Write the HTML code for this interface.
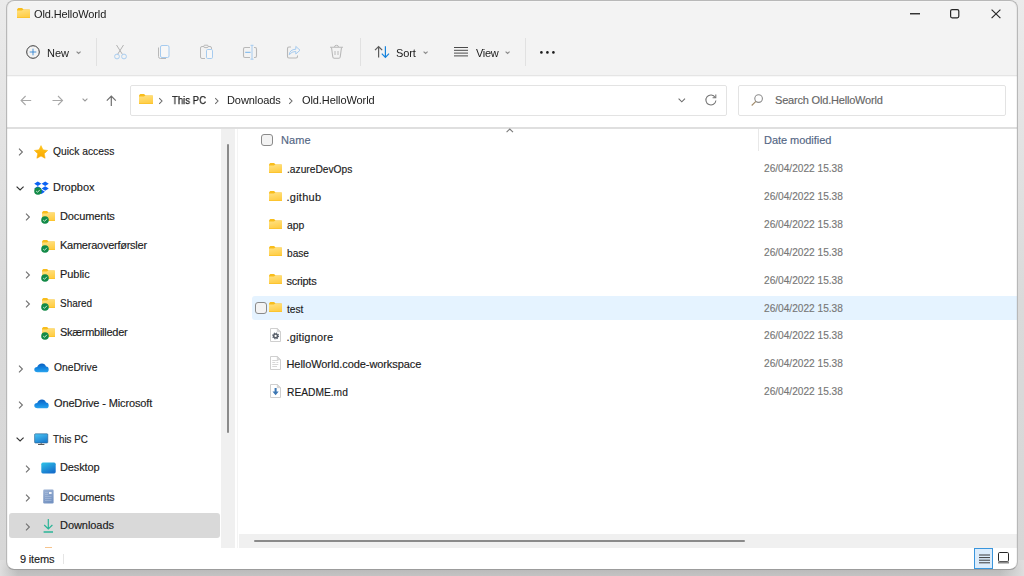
<!DOCTYPE html>
<html><head><meta charset="utf-8">
<style>
html,body{margin:0;padding:0;width:1024px;height:576px;overflow:hidden}
body{position:relative;background:linear-gradient(#ebebeb 0px,#dadada 300px,#d7d7d7 560px);font-family:"Liberation Sans",sans-serif;font-size:11px;line-height:13px;color:#1b1b1b}
.a{position:absolute}
.t{position:absolute;white-space:pre;font-size:11px;line-height:13px;-webkit-text-stroke:0.15px currentColor}
svg{position:absolute;overflow:visible}
#shadowb{position:absolute;left:0;top:560px;width:1024px;height:16px;background:linear-gradient(90deg,rgba(222,222,222,1) 0px,rgba(222,222,222,0) 18px,rgba(222,222,222,0) 1000px,rgba(222,222,222,1) 1024px),linear-gradient(#d0d0d0 0px,#bbbbbb 10px,#c3c3c3 16px)}
#clip{position:absolute;left:7px;top:1px;width:1010px;height:568px;border-radius:7px;overflow:hidden;background:#fff}
#pg{position:absolute;left:-7px;top:-1px;width:1024px;height:576px}
#frame{position:absolute;left:6px;top:0;width:1010px;height:568px;border:1px solid #b8b8b8;border-bottom-color:#9c9c9c;border-radius:8px;box-shadow:inset 1px 0 0 rgba(0,0,0,0.045),inset -1px 0 0 rgba(0,0,0,0.045)}
</style></head><body>

<svg width="0" height="0" style="position:absolute">
<defs>
<linearGradient id="fold" x1="0" y1="0" x2="0.3" y2="1"><stop offset="0" stop-color="#ffe182"/><stop offset="1" stop-color="#ffcd45"/></linearGradient>
<linearGradient id="star" x1="0" y1="0" x2="0" y2="1"><stop offset="0" stop-color="#ffc41a"/><stop offset="1" stop-color="#f9a800"/></linearGradient>
<linearGradient id="mon" x1="0" y1="0" x2="0.5" y2="1"><stop offset="0" stop-color="#4cc6f4"/><stop offset="1" stop-color="#1a7fd0"/></linearGradient>
<linearGradient id="desk" x1="0" y1="0" x2="0.6" y2="1"><stop offset="0" stop-color="#2fc4e8"/><stop offset="1" stop-color="#1670cc"/></linearGradient>
<linearGradient id="docs" x1="0" y1="0" x2="0.5" y2="1"><stop offset="0" stop-color="#9cb2d4"/><stop offset="1" stop-color="#7593c2"/></linearGradient>
<linearGradient id="cloud" x1="0" y1="0" x2="0" y2="1"><stop offset="0" stop-color="#0b5fc0"/><stop offset="0.55" stop-color="#1385e0"/><stop offset="1" stop-color="#2aa4ee"/></linearGradient>
</defs></svg>
<div id="shadowb"></div>
<div id="clip"><div id="pg">
<div class="a" style="left:0px;top:0px;width:1024px;height:75px;background:#f3f3f3;"></div>
<div class="a" style="left:0px;top:1px;width:1024px;height:1px;background:#f6f6f6;"></div>
<div class="a" style="left:0px;top:75px;width:1024px;height:1px;background:#e5e5e5;"></div>
<div class="a" style="left:0px;top:76px;width:1024px;height:1px;background:#f8f8f8;"></div>
<svg style="left:17px;top:8px" width="13" height="10" viewBox="0 0 13 10"><path d="M0.5 1.2 Q0.5 0 1.6 0 H4.6 Q5.4 0 5.9 0.8 L6.4 1.4 H12.4 Q13 1.4 13 2 V9.4 Q13 10 12.4 10 H0.6 Q0 10 0 9.4 V1.2 Z" fill="#f8bd1c"/><path d="M0 2.6 H4.8 L6.2 1.8 H12.5 Q13 1.8 13 2.4 V9.5 Q13 10 12.5 10 H0.5 Q0 10 0 9.5 Z" fill="url(#fold)"/><rect x="0" y="9" width="13" height="1" fill="#fbc22c" opacity="0.85"/></svg>
<div class="t" style="left:34px;top:8px;letter-spacing:-0.115px;-webkit-text-stroke:0;will-change:transform;color:#202020">Old.HelloWorld</div>
<div class="a" style="left:910px;top:13px;width:10px;height:1px;background:#333333;"></div>
<div class="a" style="left:910px;top:14px;width:10px;height:1px;background:#9a9a9a;"></div>
<svg style="left:950px;top:9px" width="10" height="10" viewBox="0 0 10 10"><rect x="0.6" y="0.6" width="8.2" height="8.2" rx="1.5" fill="none" stroke="#262626" stroke-width="1.2"/></svg>
<svg style="left:991px;top:9px" width="10" height="10" viewBox="0 0 10 10"><path d="M0.6 0.6 L9.4 9.2 M9.4 0.6 L0.6 9.2" stroke="#262626" stroke-width="1.15"/></svg>
<svg style="left:26px;top:45px" width="14" height="14" viewBox="0 0 14 14"><circle cx="7" cy="7" r="6.3" fill="none" stroke="#3a3a3a" stroke-width="1"/><path d="M7 3.7 V10.3 M3.7 7 H10.3" stroke="#2a7fd0" stroke-width="0.85"/></svg>
<div class="t" style="left:47px;top:47px;letter-spacing:0px;-webkit-text-stroke:0;will-change:transform;color:#202020">New</div>
<svg style="left:76px;top:51px" width="6" height="5" viewBox="0 0 6 5"><path d="M0.6 0.6 L2.6 2.4 L4.6 0.6" stroke="#8c8c8c" stroke-width="1.2" fill="none"/></svg>
<div class="a" style="left:96px;top:38px;width:1px;height:28px;background:#e1e1e1;"></div>
<svg style="left:113px;top:44px" width="16" height="16" viewBox="0 0 16 16"><path d="M3.5 1 L9.5 10.5 M10.5 1 L4.5 10.5" stroke="#b3b3b3" stroke-width="1" fill="none"/><circle cx="4" cy="12.5" r="2.4" fill="none" stroke="#a9cdf0" stroke-width="1"/><circle cx="11" cy="12.5" r="2.4" fill="none" stroke="#a9cdf0" stroke-width="1"/></svg>
<svg style="left:157px;top:44px" width="14" height="16" viewBox="0 0 14 16"><path d="M1.5 3.5 V12.5 Q1.5 14.5 3.5 14.5 H9" stroke="#b8b8b8" stroke-width="1" fill="none"/><rect x="3.5" y="1.5" width="8.5" height="12" rx="1.5" fill="#f7f7f7" stroke="#a6cbef" stroke-width="1"/></svg>
<svg style="left:199px;top:44px" width="16" height="16" viewBox="0 0 16 16"><path d="M6 14.5 H3 Q1.5 14.5 1.5 13 V4 Q1.5 2.5 3 2.5 H11 Q12.5 2.5 12.5 4 V5" stroke="#b8b8b8" stroke-width="1" fill="none"/><rect x="4.8" y="1.2" width="4.4" height="2.4" rx="1" fill="#f3f3f3" stroke="#b8b8b8" stroke-width="1"/><rect x="7.5" y="5.5" width="6" height="9" rx="1.2" fill="#f7f7f7" stroke="#a6cbef" stroke-width="1"/></svg>
<svg style="left:242px;top:44px" width="16" height="16" viewBox="0 0 16 16"><path d="M8 3.5 H3 Q1.5 3.5 1.5 5 V12 Q1.5 13.5 3 13.5 H8 M12 3.5 H13 Q14.5 3.5 14.5 5 V12 Q14.5 13.5 13 13.5 H12" stroke="#b8b8b8" stroke-width="1.1" fill="none"/><path d="M3.2 8.3 H8.6" stroke="#8cbfec" stroke-width="1.3"/><path d="M10 1.3 V15.2 M8.5 1.3 H11.5 M8.5 15.2 H11.5" stroke="#a6cbef" stroke-width="1"/></svg>
<svg style="left:286px;top:44px" width="16" height="16" viewBox="0 0 16 16"><path d="M5 3 H3 Q1.5 3 1.5 4.5 V12.5 Q1.5 14 3 14 H10 Q11.5 14 11.5 12.5 V11.5" stroke="#b8b8b8" stroke-width="1.1" fill="none"/><path d="M3.2 10.8 Q3.6 5.6 9.8 5.2 V2.4 L14 6.2 L9.8 10 V7.4 Q5.6 7.4 3.2 10.8 Z" fill="#f4f4f4" stroke="#a6cbef" stroke-width="1"/></svg>
<svg style="left:329px;top:44px" width="16" height="16" viewBox="0 0 16 16"><path d="M1 3.3 H14" stroke="#b8b8b8" stroke-width="1.1"/><path d="M5.5 3 Q5.5 1.3 7.5 1.3 Q9.5 1.3 9.5 3" stroke="#b8b8b8" stroke-width="1" fill="none"/><path d="M2.5 3.5 L3.8 13 Q4 14.3 5.3 14.3 H9.7 Q11 14.3 11.2 13 L12.5 3.5" stroke="#b8b8b8" stroke-width="1.1" fill="none"/><path d="M6 7 V11 M9 7 V11" stroke="#b8b8b8" stroke-width="1"/></svg>
<div class="a" style="left:360px;top:38px;width:1px;height:28px;background:#e1e1e1;"></div>
<svg style="left:374px;top:45px" width="17" height="14" viewBox="0 0 17 14"><path d="M4.6 12.5 V1.8 M1 5.2 L4.6 1.6 L8.2 5.2" stroke="#5c5c5c" stroke-width="1.2" fill="none"/><path d="M11.4 1.2 V12.2 M7.8 8.6 L11.4 12.3 L15 8.6" stroke="#1583dd" stroke-width="1.2" fill="none"/></svg>
<div class="t" style="left:396px;top:47px;letter-spacing:-0.13px;-webkit-text-stroke:0;will-change:transform;color:#202020">Sort</div>
<svg style="left:423px;top:51px" width="6" height="5" viewBox="0 0 6 5"><path d="M0.6 0.6 L2.6 2.4 L4.6 0.6" stroke="#8c8c8c" stroke-width="1.2" fill="none"/></svg>
<svg style="left:454px;top:46px" width="15" height="12" viewBox="0 0 15 12"><path d="M0 1.5 H14 M0 4.3 H14 M0 7.1 H14 M0 9.9 H14" stroke="#4a4a4a" stroke-width="1"/></svg>
<div class="t" style="left:476px;top:47px;letter-spacing:-0.28px;-webkit-text-stroke:0;will-change:transform;color:#202020">View</div>
<svg style="left:505px;top:51px" width="6" height="5" viewBox="0 0 6 5"><path d="M0.6 0.6 L2.6 2.4 L4.6 0.6" stroke="#8c8c8c" stroke-width="1.2" fill="none"/></svg>
<div class="a" style="left:525px;top:38px;width:1px;height:28px;background:#e1e1e1;"></div>
<svg style="left:540px;top:51px" width="16" height="3" viewBox="0 0 16 3"><circle cx="1.4" cy="1.4" r="1.3" fill="#1b1b1b"/><circle cx="7.4" cy="1.4" r="1.3" fill="#1b1b1b"/><circle cx="13.4" cy="1.4" r="1.3" fill="#1b1b1b"/></svg>
<svg style="left:20px;top:95px" width="12" height="11" viewBox="0 0 12 11"><path d="M11.2 5.5 H1.2 M5.6 1 L1.1 5.5 L5.6 10" stroke="#a8a8a8" stroke-width="1.1" fill="none"/></svg>
<svg style="left:52px;top:95px" width="12" height="11" viewBox="0 0 12 11"><path d="M0.5 5.5 H10.5 M6 1 L10.5 5.5 L6 10" stroke="#a8a8a8" stroke-width="1.1" fill="none"/></svg>
<svg style="left:82px;top:98px" width="7" height="4" viewBox="0 0 7 4"><path d="M0.6 0.6 L3 3 L5.4 0.6" stroke="#9a9a9a" stroke-width="1.1" fill="none"/></svg>
<svg style="left:106px;top:95px" width="11" height="12" viewBox="0 0 11 12"><path d="M5.3 11 V1.2 M0.8 5.6 L5.3 1.1 L9.8 5.6" stroke="#6f6f6f" stroke-width="1.2" fill="none"/></svg>
<div class="a" style="left:130px;top:85px;width:595px;height:29px;border:1px solid #e3e3e3;border-radius:2px;background:#fff"></div>
<svg style="left:139px;top:94px" width="14" height="10" viewBox="0 0 14 10"><path d="M0.5 1.2 Q0.5 0 1.6 0 H4.6 Q5.4 0 5.9 0.8 L6.4 1.4 H13.4 Q14 1.4 14 2 V9.4 Q14 10 13.4 10 H0.6 Q0 10 0 9.4 V1.2 Z" fill="#f8bd1c"/><path d="M0 2.6 H4.8 L6.2 1.8 H13.5 Q14 1.8 14 2.4 V9.5 Q14 10 13.5 10 H0.5 Q0 10 0 9.5 Z" fill="url(#fold)"/><rect x="0" y="9" width="14" height="1" fill="#fbc22c" opacity="0.85"/></svg>
<svg style="left:158px;top:97px" width="6" height="8" viewBox="0 0 6 8"><path d="M1.2 1.2 L4 4 L1.2 6.8" stroke="#6a6a6a" stroke-width="1.05" fill="none"/></svg>
<div class="t" style="left:172px;top:94px;transform:scaleX(0.87);transform-origin:0 0;-webkit-text-stroke:0;will-change:transform;color:#202020;-webkit-text-stroke:0.25px #202020">This PC</div>
<svg style="left:214px;top:97px" width="6" height="8" viewBox="0 0 6 8"><path d="M1.2 1.2 L4 4 L1.2 6.8" stroke="#6a6a6a" stroke-width="1.05" fill="none"/></svg>
<div class="t" style="left:227px;top:94px;letter-spacing:-0.075px;-webkit-text-stroke:0;will-change:transform;color:#202020">Downloads</div>
<svg style="left:288px;top:97px" width="6" height="8" viewBox="0 0 6 8"><path d="M1.2 1.2 L4 4 L1.2 6.8" stroke="#6a6a6a" stroke-width="1.05" fill="none"/></svg>
<div class="t" style="left:302px;top:94px;letter-spacing:-0.09px;-webkit-text-stroke:0;will-change:transform;color:#202020">Old.HelloWorld</div>
<svg style="left:678px;top:98px" width="8" height="5" viewBox="0 0 8 5"><path d="M0.6 0.6 L3.8 3.8 L7 0.6" stroke="#6e6e6e" stroke-width="1.1" fill="none"/></svg>
<svg style="left:705px;top:94px" width="12" height="12" viewBox="0 0 12 12"><path d="M10.2 3.4 A5 5 0 1 0 10.9 6.5" stroke="#747474" stroke-width="1.05" fill="none"/><path d="M10.8 0.6 V3.8 H7.6" stroke="#747474" stroke-width="1.05" fill="none"/></svg>
<div class="a" style="left:738px;top:85px;width:266px;height:29px;border:1px solid #e3e3e3;border-radius:2px;background:#fff"></div>
<svg style="left:751px;top:94px" width="13" height="13" viewBox="0 0 13 13"><circle cx="7.6" cy="4.6" r="3.8" fill="none" stroke="#8c8c8c" stroke-width="1.1"/><path d="M4.9 7.3 L0.7 11.5" stroke="#a08a6a" stroke-width="1.1"/></svg>
<div class="t" style="left:775px;top:94px;color:#666666;letter-spacing:-0.19px">Search Old.HelloWorld</div>
<div class="a" style="left:0px;top:127px;width:1024px;height:2px;background:#dfdfdf;"></div>
<div class="a" style="left:221px;top:129px;width:14px;height:419px;background:#f0f0f0;"></div>
<div class="a" style="left:237px;top:129px;width:1px;height:419px;background:#f4f4f4;"></div>
<div class="a" style="left:227px;top:144px;width:2px;height:289px;background:#8a8a8a;border-radius:1px"></div>
<div class="a" style="left:9px;top:513px;width:211px;height:25px;background:#d9d9d9;border-radius:3px"></div>
<svg style="left:18px;top:148px" width="6" height="8" viewBox="0 0 6 8"><path d="M1 0.6 L4.4 4 L1 7.4" stroke="#707070" stroke-width="1.1" fill="none"/></svg>
<svg style="left:34px;top:145px" width="15" height="14" viewBox="0 0 15 14"><path d="M7.00 0.60 L9.00 4.85 L13.66 5.44 L10.23 8.65 L11.11 13.26 L7.00 11.00 L2.89 13.26 L3.77 8.65 L0.34 5.44 L5.00 4.85 Z" fill="url(#star)" stroke="url(#star)" stroke-width="0.6" stroke-linejoin="round"/></svg>
<div class="t" style="left:53px;top:145px;transform:scaleX(0.937);transform-origin:0 0">Quick access</div>
<svg style="left:16px;top:186px" width="9" height="5" viewBox="0 0 9 5"><path d="M0.6 0.6 L4.1 3.9 L7.6 0.6" stroke="#333333" stroke-width="1.2" fill="none"/></svg>
<svg style="left:34px;top:181px" width="15" height="14" viewBox="0 0 15 14"><path d="M3.8 0.4 L7.4 2.7 L3.8 5 L0.2 2.7 Z M11.2 0.4 L14.8 2.7 L11.2 5 L7.6 2.7 Z M3.8 5.2 L7.4 7.5 L3.8 9.8 L0.2 7.5 Z M11.2 5.2 L14.8 7.5 L11.2 9.8 L7.6 7.5 Z M7.5 8.6 L10.9 10.8 L7.5 13 L4.1 10.8 Z" fill="#0b62f4"/></svg>
<svg style="left:34px;top:187px" width="8" height="8" viewBox="0 0 8 8"><circle cx="4" cy="4" r="3.8" fill="#128a47"/><path d="M2.2 4.1 L3.5 5.3 L5.9 2.8" stroke="#d8f0df" stroke-width="0.9" fill="none"/></svg>
<div class="t" style="left:53px;top:181px;letter-spacing:0px">Dropbox</div>
<svg style="left:25px;top:213px" width="6" height="8" viewBox="0 0 6 8"><path d="M1 0.6 L4.4 4 L1 7.4" stroke="#707070" stroke-width="1.1" fill="none"/></svg>
<svg style="left:42px;top:211px" width="13" height="10" viewBox="0 0 13 10"><path d="M0.5 1.2 Q0.5 0 1.6 0 H4.6 Q5.4 0 5.9 0.8 L6.4 1.4 H12.4 Q13 1.4 13 2 V9.4 Q13 10 12.4 10 H0.6 Q0 10 0 9.4 V1.2 Z" fill="#f8bd1c"/><path d="M0 2.6 H4.8 L6.2 1.8 H12.5 Q13 1.8 13 2.4 V9.5 Q13 10 12.5 10 H0.5 Q0 10 0 9.5 Z" fill="url(#fold)"/><rect x="0" y="9" width="13" height="1" fill="#fbc22c" opacity="0.85"/></svg>
<svg style="left:41px;top:216px" width="8" height="8" viewBox="0 0 8 8"><circle cx="4" cy="4" r="3.8" fill="#128a47"/><path d="M2.2 4.1 L3.5 5.3 L5.9 2.8" stroke="#d8f0df" stroke-width="0.9" fill="none"/></svg>
<div class="t" style="left:60px;top:210px;letter-spacing:-0.1px">Documents</div>
<svg style="left:42px;top:240px" width="13" height="10" viewBox="0 0 13 10"><path d="M0.5 1.2 Q0.5 0 1.6 0 H4.6 Q5.4 0 5.9 0.8 L6.4 1.4 H12.4 Q13 1.4 13 2 V9.4 Q13 10 12.4 10 H0.6 Q0 10 0 9.4 V1.2 Z" fill="#f8bd1c"/><path d="M0 2.6 H4.8 L6.2 1.8 H12.5 Q13 1.8 13 2.4 V9.5 Q13 10 12.5 10 H0.5 Q0 10 0 9.5 Z" fill="url(#fold)"/><rect x="0" y="9" width="13" height="1" fill="#fbc22c" opacity="0.85"/></svg>
<svg style="left:41px;top:245px" width="8" height="8" viewBox="0 0 8 8"><circle cx="4" cy="4" r="3.8" fill="#128a47"/><path d="M2.2 4.1 L3.5 5.3 L5.9 2.8" stroke="#d8f0df" stroke-width="0.9" fill="none"/></svg>
<div class="t" style="left:60px;top:239px;letter-spacing:-0.25px">Kameraoverførsler</div>
<svg style="left:25px;top:271px" width="6" height="8" viewBox="0 0 6 8"><path d="M1 0.6 L4.4 4 L1 7.4" stroke="#707070" stroke-width="1.1" fill="none"/></svg>
<svg style="left:42px;top:269px" width="13" height="10" viewBox="0 0 13 10"><path d="M0.5 1.2 Q0.5 0 1.6 0 H4.6 Q5.4 0 5.9 0.8 L6.4 1.4 H12.4 Q13 1.4 13 2 V9.4 Q13 10 12.4 10 H0.6 Q0 10 0 9.4 V1.2 Z" fill="#f8bd1c"/><path d="M0 2.6 H4.8 L6.2 1.8 H12.5 Q13 1.8 13 2.4 V9.5 Q13 10 12.5 10 H0.5 Q0 10 0 9.5 Z" fill="url(#fold)"/><rect x="0" y="9" width="13" height="1" fill="#fbc22c" opacity="0.85"/></svg>
<svg style="left:41px;top:274px" width="8" height="8" viewBox="0 0 8 8"><circle cx="4" cy="4" r="3.8" fill="#128a47"/><path d="M2.2 4.1 L3.5 5.3 L5.9 2.8" stroke="#d8f0df" stroke-width="0.9" fill="none"/></svg>
<div class="t" style="left:60px;top:268px;letter-spacing:-0.04px">Public</div>
<svg style="left:25px;top:300px" width="6" height="8" viewBox="0 0 6 8"><path d="M1 0.6 L4.4 4 L1 7.4" stroke="#707070" stroke-width="1.1" fill="none"/></svg>
<svg style="left:42px;top:298px" width="13" height="10" viewBox="0 0 13 10"><path d="M0.5 1.2 Q0.5 0 1.6 0 H4.6 Q5.4 0 5.9 0.8 L6.4 1.4 H12.4 Q13 1.4 13 2 V9.4 Q13 10 12.4 10 H0.6 Q0 10 0 9.4 V1.2 Z" fill="#f8bd1c"/><path d="M0 2.6 H4.8 L6.2 1.8 H12.5 Q13 1.8 13 2.4 V9.5 Q13 10 12.5 10 H0.5 Q0 10 0 9.5 Z" fill="url(#fold)"/><rect x="0" y="9" width="13" height="1" fill="#fbc22c" opacity="0.85"/></svg>
<svg style="left:41px;top:303px" width="8" height="8" viewBox="0 0 8 8"><circle cx="4" cy="4" r="3.8" fill="#128a47"/><path d="M2.2 4.1 L3.5 5.3 L5.9 2.8" stroke="#d8f0df" stroke-width="0.9" fill="none"/></svg>
<div class="t" style="left:60px;top:297px;transform:scaleX(0.905);transform-origin:0 0">Shared</div>
<svg style="left:42px;top:327px" width="13" height="10" viewBox="0 0 13 10"><path d="M0.5 1.2 Q0.5 0 1.6 0 H4.6 Q5.4 0 5.9 0.8 L6.4 1.4 H12.4 Q13 1.4 13 2 V9.4 Q13 10 12.4 10 H0.6 Q0 10 0 9.4 V1.2 Z" fill="#f8bd1c"/><path d="M0 2.6 H4.8 L6.2 1.8 H12.5 Q13 1.8 13 2.4 V9.5 Q13 10 12.5 10 H0.5 Q0 10 0 9.5 Z" fill="url(#fold)"/><rect x="0" y="9" width="13" height="1" fill="#fbc22c" opacity="0.85"/></svg>
<svg style="left:41px;top:332px" width="8" height="8" viewBox="0 0 8 8"><circle cx="4" cy="4" r="3.8" fill="#128a47"/><path d="M2.2 4.1 L3.5 5.3 L5.9 2.8" stroke="#d8f0df" stroke-width="0.9" fill="none"/></svg>
<div class="t" style="left:60px;top:326px;letter-spacing:-0.27px">Skærmbilleder</div>
<svg style="left:18px;top:365px" width="6" height="8" viewBox="0 0 6 8"><path d="M1 0.6 L4.4 4 L1 7.4" stroke="#707070" stroke-width="1.1" fill="none"/></svg>
<svg style="left:34px;top:363px" width="15" height="10" viewBox="0 0 15 10"><path d="M3.5 9.3 Q0.3 9.3 0.3 6.6 Q0.3 4.2 3.2 4 Q4.4 0.4 8 0.4 Q11 0.4 12 3.4 Q14.7 3.6 14.7 6.4 Q14.7 9.3 12 9.3 Z" fill="url(#cloud)"/></svg>
<div class="t" style="left:54px;top:361px;transform:scaleX(0.935);transform-origin:0 0">OneDrive</div>
<svg style="left:18px;top:401px" width="6" height="8" viewBox="0 0 6 8"><path d="M1 0.6 L4.4 4 L1 7.4" stroke="#707070" stroke-width="1.1" fill="none"/></svg>
<svg style="left:34px;top:399px" width="15" height="10" viewBox="0 0 15 10"><path d="M3.5 9.3 Q0.3 9.3 0.3 6.6 Q0.3 4.2 3.2 4 Q4.4 0.4 8 0.4 Q11 0.4 12 3.4 Q14.7 3.6 14.7 6.4 Q14.7 9.3 12 9.3 Z" fill="url(#cloud)"/></svg>
<div class="t" style="left:54px;top:397px;letter-spacing:-0.14px">OneDrive - Microsoft</div>
<svg style="left:16px;top:437px" width="9" height="5" viewBox="0 0 9 5"><path d="M0.6 0.6 L4.1 3.9 L7.6 0.6" stroke="#333333" stroke-width="1.2" fill="none"/></svg>
<svg style="left:34px;top:433px" width="15" height="13" viewBox="0 0 15 13"><rect x="0.6" y="0.8" width="13.2" height="9.2" rx="0.8" fill="url(#mon)" stroke="#2a5a88" stroke-width="0.6"/><path d="M7.2 10 V11" stroke="#6a6a6a" stroke-width="1"/><path d="M4 11.5 H10.4" stroke="#5a5a5a" stroke-width="1"/></svg>
<div class="t" style="left:53px;top:433px;transform:scaleX(0.89);transform-origin:0 0">This PC</div>
<svg style="left:25px;top:465px" width="6" height="8" viewBox="0 0 6 8"><path d="M1 0.6 L4.4 4 L1 7.4" stroke="#707070" stroke-width="1.1" fill="none"/></svg>
<svg style="left:41px;top:462px" width="15" height="12" viewBox="0 0 15 12"><rect x="0.3" y="0.6" width="14.4" height="10.8" rx="1.6" fill="url(#desk)"/></svg>
<div class="t" style="left:60px;top:461px;letter-spacing:-0.14px">Desktop</div>
<svg style="left:25px;top:494px" width="6" height="8" viewBox="0 0 6 8"><path d="M1 0.6 L4.4 4 L1 7.4" stroke="#707070" stroke-width="1.1" fill="none"/></svg>
<svg style="left:43px;top:489px" width="11" height="15" viewBox="0 0 11 15"><rect x="0.2" y="0.6" width="10.4" height="13.8" rx="1.2" fill="url(#docs)"/><path d="M2 3.5 H5 M2 5.5 H5 M2 7.5 H8.5 M2 9.5 H8.5 M2 11.5 H8.5" stroke="#b5c6e0" stroke-width="0.5"/><rect x="6" y="3" width="2.6" height="2" fill="#eef2f9"/></svg>
<div class="t" style="left:60px;top:491px;letter-spacing:-0.1px">Documents</div>
<svg style="left:25px;top:523px" width="6" height="8" viewBox="0 0 6 8"><path d="M1 0.6 L4.4 4 L1 7.4" stroke="#707070" stroke-width="1.1" fill="none"/></svg>
<svg style="left:43px;top:518px" width="11" height="16" viewBox="0 0 11 16"><path d="M5.3 1 V11 M1.2 7 L5.3 11 L9.4 7" stroke="#2ab597" stroke-width="1.2" fill="none"/><path d="M0.6 14 H10" stroke="#2ab597" stroke-width="1.4"/></svg>
<div class="t" style="left:60px;top:519px;letter-spacing:-0.06px">Downloads</div>
<div class="a" style="left:45px;top:547px;width:7px;height:1px;background:#f6c48e;"></div>
<div class="a" style="left:261px;top:134px;width:10px;height:10px;border:1px solid #8a8a8a;border-radius:3px;background:#f3f3f3"></div>
<div class="t" style="left:281px;top:134px;color:#536684;letter-spacing:0.1px">Name</div>
<svg style="left:506px;top:128px" width="8" height="5" viewBox="0 0 8 5"><path d="M0.6 4.2 L3.8 1 L7 4.2" stroke="#7a7a7a" stroke-width="1.1" fill="none"/></svg>
<div class="a" style="left:758px;top:129px;width:1px;height:22px;background:#e8e8e8;"></div>
<div class="t" style="left:764px;top:134px;color:#536684;letter-spacing:-0.04px">Date modified</div>
<div class="a" style="left:252px;top:296px;width:765px;height:24px;background:#e5f3ff;border-radius:3px 0 0 3px"></div>
<div class="a" style="left:255px;top:302px;width:10px;height:10px;border:1px solid #8a8a8a;border-radius:3px;background:#f3f3f3"></div>
<svg style="left:269px;top:163px" width="13" height="10" viewBox="0 0 13 10"><path d="M0.5 1.2 Q0.5 0 1.6 0 H4.6 Q5.4 0 5.9 0.8 L6.4 1.4 H12.4 Q13 1.4 13 2 V9.4 Q13 10 12.4 10 H0.6 Q0 10 0 9.4 V1.2 Z" fill="#f8bd1c"/><path d="M0 2.6 H4.8 L6.2 1.8 H12.5 Q13 1.8 13 2.4 V9.5 Q13 10 12.5 10 H0.5 Q0 10 0 9.5 Z" fill="url(#fold)"/><rect x="0" y="9" width="13" height="1" fill="#fbc22c" opacity="0.85"/></svg>
<div class="t" style="left:286.5px;top:163px;transform:scaleX(0.93);transform-origin:0 0">.azureDevOps</div>
<div class="t" style="left:764px;top:162px;transform:scaleX(0.921);transform-origin:0 0;color:#777777">26/04/2022 15.38</div>
<svg style="left:269px;top:191px" width="13" height="10" viewBox="0 0 13 10"><path d="M0.5 1.2 Q0.5 0 1.6 0 H4.6 Q5.4 0 5.9 0.8 L6.4 1.4 H12.4 Q13 1.4 13 2 V9.4 Q13 10 12.4 10 H0.6 Q0 10 0 9.4 V1.2 Z" fill="#f8bd1c"/><path d="M0 2.6 H4.8 L6.2 1.8 H12.5 Q13 1.8 13 2.4 V9.5 Q13 10 12.5 10 H0.5 Q0 10 0 9.5 Z" fill="url(#fold)"/><rect x="0" y="9" width="13" height="1" fill="#fbc22c" opacity="0.85"/></svg>
<div class="t" style="left:286.5px;top:191px;letter-spacing:0.25px">.github</div>
<div class="t" style="left:764px;top:190px;transform:scaleX(0.921);transform-origin:0 0;color:#777777">26/04/2022 15.38</div>
<svg style="left:269px;top:219px" width="13" height="10" viewBox="0 0 13 10"><path d="M0.5 1.2 Q0.5 0 1.6 0 H4.6 Q5.4 0 5.9 0.8 L6.4 1.4 H12.4 Q13 1.4 13 2 V9.4 Q13 10 12.4 10 H0.6 Q0 10 0 9.4 V1.2 Z" fill="#f8bd1c"/><path d="M0 2.6 H4.8 L6.2 1.8 H12.5 Q13 1.8 13 2.4 V9.5 Q13 10 12.5 10 H0.5 Q0 10 0 9.5 Z" fill="url(#fold)"/><rect x="0" y="9" width="13" height="1" fill="#fbc22c" opacity="0.85"/></svg>
<div class="t" style="left:286.5px;top:219px;transform:scaleX(0.944);transform-origin:0 0">app</div>
<div class="t" style="left:764px;top:218px;transform:scaleX(0.921);transform-origin:0 0;color:#777777">26/04/2022 15.38</div>
<svg style="left:269px;top:246px" width="13" height="10" viewBox="0 0 13 10"><path d="M0.5 1.2 Q0.5 0 1.6 0 H4.6 Q5.4 0 5.9 0.8 L6.4 1.4 H12.4 Q13 1.4 13 2 V9.4 Q13 10 12.4 10 H0.6 Q0 10 0 9.4 V1.2 Z" fill="#f8bd1c"/><path d="M0 2.6 H4.8 L6.2 1.8 H12.5 Q13 1.8 13 2.4 V9.5 Q13 10 12.5 10 H0.5 Q0 10 0 9.5 Z" fill="url(#fold)"/><rect x="0" y="9" width="13" height="1" fill="#fbc22c" opacity="0.85"/></svg>
<div class="t" style="left:286.5px;top:247px;transform:scaleX(0.92);transform-origin:0 0">base</div>
<div class="t" style="left:764px;top:246px;transform:scaleX(0.921);transform-origin:0 0;color:#777777">26/04/2022 15.38</div>
<svg style="left:269px;top:274px" width="13" height="10" viewBox="0 0 13 10"><path d="M0.5 1.2 Q0.5 0 1.6 0 H4.6 Q5.4 0 5.9 0.8 L6.4 1.4 H12.4 Q13 1.4 13 2 V9.4 Q13 10 12.4 10 H0.6 Q0 10 0 9.4 V1.2 Z" fill="#f8bd1c"/><path d="M0 2.6 H4.8 L6.2 1.8 H12.5 Q13 1.8 13 2.4 V9.5 Q13 10 12.5 10 H0.5 Q0 10 0 9.5 Z" fill="url(#fold)"/><rect x="0" y="9" width="13" height="1" fill="#fbc22c" opacity="0.85"/></svg>
<div class="t" style="left:286.5px;top:275px;letter-spacing:-0.27px">scripts</div>
<div class="t" style="left:764px;top:274px;transform:scaleX(0.921);transform-origin:0 0;color:#777777">26/04/2022 15.38</div>
<svg style="left:269px;top:302px" width="13" height="10" viewBox="0 0 13 10"><path d="M0.5 1.2 Q0.5 0 1.6 0 H4.6 Q5.4 0 5.9 0.8 L6.4 1.4 H12.4 Q13 1.4 13 2 V9.4 Q13 10 12.4 10 H0.6 Q0 10 0 9.4 V1.2 Z" fill="#f8bd1c"/><path d="M0 2.6 H4.8 L6.2 1.8 H12.5 Q13 1.8 13 2.4 V9.5 Q13 10 12.5 10 H0.5 Q0 10 0 9.5 Z" fill="url(#fold)"/><rect x="0" y="9" width="13" height="1" fill="#fbc22c" opacity="0.85"/></svg>
<div class="t" style="left:286.5px;top:303px;transform:scaleX(0.922);transform-origin:0 0">test</div>
<div class="t" style="left:764px;top:302px;transform:scaleX(0.921);transform-origin:0 0;color:#777777">26/04/2022 15.38</div>
<svg style="left:270px;top:328px" width="11" height="14" viewBox="0 0 11 14"><path d="M0.5 0.5 H7.3 L10.5 3.7 V13.5 H0.5 Z" fill="#ffffff" stroke="#cfcfcf" stroke-width="1"/><path d="M7.3 0.5 V3.7 H10.5 Z" fill="#d6d6d6" stroke="#cfcfcf" stroke-width="0.8"/><circle cx="5.6" cy="7.9" r="1.9" fill="none" stroke="#585d66" stroke-width="1.5"/><circle cx="5.6" cy="7.9" r="2.9" fill="none" stroke="#5a6472" stroke-width="1.2" stroke-dasharray="1.2 1.08"/></svg>
<div class="t" style="left:286.5px;top:331px;letter-spacing:0.15px">.gitignore</div>
<div class="t" style="left:764px;top:329px;transform:scaleX(0.921);transform-origin:0 0;color:#777777">26/04/2022 15.38</div>
<svg style="left:270px;top:356px" width="11" height="14" viewBox="0 0 11 14"><path d="M0.5 0.5 H7.3 L10.5 3.7 V13.5 H0.5 Z" fill="#ffffff" stroke="#cfcfcf" stroke-width="1"/><path d="M7.3 0.5 V3.7 H10.5 Z" fill="#d6d6d6" stroke="#cfcfcf" stroke-width="0.8"/><path d="M2.3 4.5 H8.3 M2.3 6.5 H5.3 M6.5 6.5 H8.3 M2.3 8.5 H8.3 M2.3 10.5 H7" stroke="#d2d2d2" stroke-width="0.9"/></svg>
<div class="t" style="left:286.5px;top:358px;letter-spacing:-0.08px">HelloWorld.code-workspace</div>
<div class="t" style="left:764px;top:357px;transform:scaleX(0.921);transform-origin:0 0;color:#777777">26/04/2022 15.38</div>
<svg style="left:270px;top:384px" width="11" height="14" viewBox="0 0 11 14"><path d="M0.5 0.5 H7.3 L10.5 3.7 V13.5 H0.5 Z" fill="#ffffff" stroke="#cfcfcf" stroke-width="1"/><path d="M7.3 0.5 V3.7 H10.5 Z" fill="#d6d6d6" stroke="#cfcfcf" stroke-width="0.8"/><path d="M4.6 4 H6.6 V7.4 H8.7 L5.6 11.3 L2.5 7.4 H4.6 Z" fill="#3b76b3"/></svg>
<div class="t" style="left:286.5px;top:386px;transform:scaleX(0.93);transform-origin:0 0">README.md</div>
<div class="t" style="left:764px;top:385px;transform:scaleX(0.921);transform-origin:0 0;color:#777777">26/04/2022 15.38</div>
<div class="a" style="left:239px;top:534px;width:778px;height:14px;background:#f0f0f0;"></div>
<div class="a" style="left:254px;top:540px;width:491px;height:2px;background:#8a8a8a;border-radius:1px"></div>
<div class="t" style="left:20px;top:553px;color:#1b1b1b;letter-spacing:-0.17px">9 items</div>
<div class="a" style="left:63px;top:554px;width:1px;height:10px;background:#e5e5e5;"></div>
<div class="a" style="left:974px;top:548px;width:17px;height:19px;border:1px solid #3a96dd;background:#dcecfb"></div>
<svg style="left:979px;top:554px" width="11" height="10" viewBox="0 0 11 10"><path d="M0 1 H11 M0 3.6 H11 M0 6.2 H11 M0 8.8 H11" stroke="#3a3a3a" stroke-width="1"/></svg>
<svg style="left:998px;top:552px" width="11" height="12" viewBox="0 0 11 12"><rect x="0.5" y="0.5" width="10" height="9" rx="1.2" fill="#fff" stroke="#262626" stroke-width="1"/><rect x="0" y="9.5" width="11" height="2" fill="#8a8a8a"/></svg>
</div></div>
<div id="frame"></div>
</body></html>
